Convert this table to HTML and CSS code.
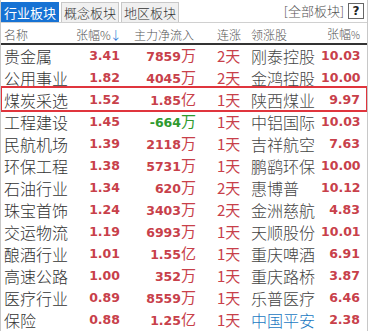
FILE: index.html
```html
<!DOCTYPE html>
<html>
<head>
<meta charset="utf-8">
<link rel="stylesheet" href="styles.css">
</head>
<body>
<div class="panel">
  <div class="tabs">
    <div class="tab active">行业板块</div>
    <div class="tab">概念板块</div>
    <div class="tab">地区板块</div>
    <div class="spacer"></div>
    <div class="all">[全部板块]</div>
    <div class="help">?</div>
  </div>
  <div class="row head">
    <div class="c name">名称</div>
    <div class="c pct">张幅%<span class="arrow">↓</span></div>
    <div class="c flow">主力净流入</div>
    <div class="c days">连涨</div>
    <div class="c stock">领涨股</div>
    <div class="c pct2">张幅<span class="pctsm">%</span></div>
  </div>
  <div class="rows">
    <div class="row"><div class="c name">贵金属</div><div class="c pct num">3.41</div><div class="c flow red"><span class="num">7859</span>万</div><div class="c days red">2天</div><div class="c stock">刚泰控股</div><div class="c pct2 num">10.03</div></div>
    <div class="row"><div class="c name">公用事业</div><div class="c pct num">1.82</div><div class="c flow red"><span class="num">4045</span>万</div><div class="c days red">2天</div><div class="c stock">金鸿控股</div><div class="c pct2 num">10.00</div></div>
    <div class="row selected"><div class="c name">煤炭采选</div><div class="c pct num">1.52</div><div class="c flow red"><span class="num">1.85</span>亿</div><div class="c days red">1天</div><div class="c stock">陕西煤业</div><div class="c pct2 num">9.97</div></div>
    <div class="row"><div class="c name">工程建设</div><div class="c pct num">1.45</div><div class="c flow green"><span class="num">-664</span>万</div><div class="c days red">1天</div><div class="c stock">中铝国际</div><div class="c pct2 num">10.03</div></div>
    <div class="row"><div class="c name">民航机场</div><div class="c pct num">1.39</div><div class="c flow red"><span class="num">2118</span>万</div><div class="c days red">1天</div><div class="c stock">吉祥航空</div><div class="c pct2 num">7.63</div></div>
    <div class="row"><div class="c name">环保工程</div><div class="c pct num">1.38</div><div class="c flow red"><span class="num">5731</span>万</div><div class="c days red">1天</div><div class="c stock">鹏鹞环保</div><div class="c pct2 num">10.00</div></div>
    <div class="row"><div class="c name">石油行业</div><div class="c pct num">1.34</div><div class="c flow red"><span class="num">620</span>万</div><div class="c days red">2天</div><div class="c stock">惠博普</div><div class="c pct2 num">10.12</div></div>
    <div class="row"><div class="c name">珠宝首饰</div><div class="c pct num">1.24</div><div class="c flow red"><span class="num">3403</span>万</div><div class="c days red">2天</div><div class="c stock">金洲慈航</div><div class="c pct2 num">4.83</div></div>
    <div class="row"><div class="c name">交运物流</div><div class="c pct num">1.19</div><div class="c flow red"><span class="num">6993</span>万</div><div class="c days red">1天</div><div class="c stock">天顺股份</div><div class="c pct2 num">10.01</div></div>
    <div class="row"><div class="c name">酿酒行业</div><div class="c pct num">1.01</div><div class="c flow red"><span class="num">1.55</span>亿</div><div class="c days red">1天</div><div class="c stock">重庆啤酒</div><div class="c pct2 num">6.91</div></div>
    <div class="row"><div class="c name">高速公路</div><div class="c pct num">1.00</div><div class="c flow red"><span class="num">352</span>万</div><div class="c days red">1天</div><div class="c stock">重庆路桥</div><div class="c pct2 num">3.87</div></div>
    <div class="row"><div class="c name">医疗行业</div><div class="c pct num">0.89</div><div class="c flow red"><span class="num">8559</span>万</div><div class="c days red">1天</div><div class="c stock">乐普医疗</div><div class="c pct2 num">6.46</div></div>
    <div class="row"><div class="c name">保险</div><div class="c pct num">0.88</div><div class="c flow red"><span class="num">1.25</span>亿</div><div class="c days red">1天</div><div class="c stock blue">中国平安</div><div class="c pct2 num">2.38</div></div>
  </div>
</div>
</body>
</html>
```

FILE: styles.css
```css
html, body {
  margin: 0;
  padding: 0;
  background: #fff;
}
body {
  width: 368px;
  height: 331px;
  overflow: hidden;
  font-family: "Noto Sans CJK SC", "DejaVu Sans", sans-serif;
}
.panel {
  width: 368px;
  height: 331px;
  box-sizing: border-box;
  border-left: 1px solid #c8c8c8;
  border-right: 1px solid #c8c8c8;
  overflow: hidden;
}
.tabs {
  display: flex;
  align-items: flex-end;
  height: 23px;
  box-sizing: border-box;
  border-bottom: 1px solid #d0d0d0;
  background: #fff;
}
.tab {
  width: 58px;
  height: 20px;
  margin-right: 2px;
  box-sizing: border-box;
  font-size: 13px;
  font-weight: 300;
  line-height: 19px;
  text-align: center;
  color: #333;
  background: #f0f0f0;
  border: 1px solid #c8c8c8;
  border-bottom: none;
}
.tab.active {
  background: #1672d4;
  border-color: #1672d4;
  color: #fff;
  font-weight: 400;
}
.spacer { flex: 1; }
.all {
  font-size: 13px;
  font-weight: 300;
  line-height: 20px;
  height: 20px;
  color: #555;
  margin-right: 4px;
  align-self: center;
}
.help {
  width: 16px;
  height: 16px;
  box-sizing: border-box;
  border: 1px solid #666;
  font-family: "DejaVu Sans", sans-serif;
  font-weight: bold;
  font-size: 12px;
  line-height: 14px;
  text-align: center;
  color: #222;
  align-self: center;
  margin-right: 3px;
}
.row {
  display: grid;
  grid-template-columns: 72px 44px 76px 55px 70px 39px;
  padding-left: 3px;
  height: 22px;
  align-items: center;
  box-sizing: border-box;
}
.row.head {
  height: 22px;
  border-bottom: 2px solid #333;
  color: #666;
}
.head .c { font-size: 12px; font-weight: 300; color: #555; }
.arrow { color: #1672d4; font-size: 12px; margin-left: -1px; }
.pctsm { font-size: 10px; }
.rows { margin-top: -1px; }
.c {
  white-space: nowrap;
  font-size: 16px;
  font-weight: 300;
  line-height: 22px;
  color: #333;
}
.name { text-align: left; }
.pct, .flow, .pct2 { text-align: right; }
.days { padding-left: 21px; }
.head .flow { padding-right: 2px; }
.stock { color: #444; }
.num, .pct.num, .pct2.num {
  font-family: "DejaVu Sans", sans-serif;
  font-weight: bold;
  font-size: 12.5px;
  color: #c8404a;
}
.red { color: #c8404a; font-size: 15px; font-weight: 400; }
.green { color: #2f9a2f; font-size: 15px; font-weight: 400; }
.green .num { color: #2f9a2f; }
.blue { color: #1a78c2; }
.row.selected {
  position: relative;
}
.row.selected::after {
  content: "";
  position: absolute;
  left: -1px;
  right: -1px;
  top: -2px;
  bottom: -2px;
  border: 2px solid #e0353d;
  pointer-events: none;
}
```
